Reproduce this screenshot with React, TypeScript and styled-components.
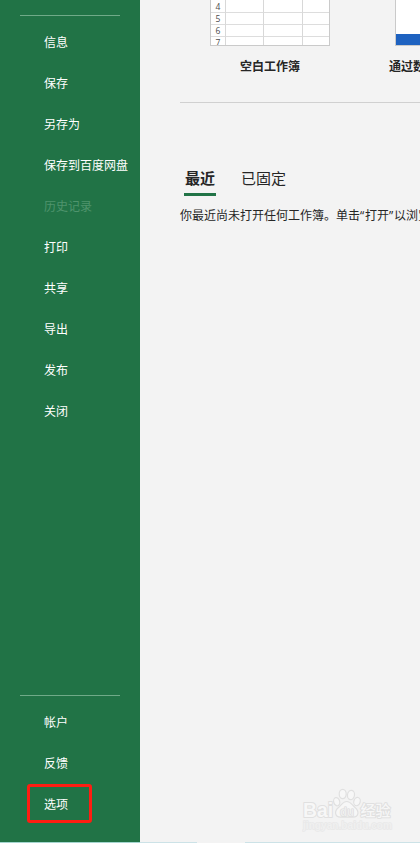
import React from "react";
import styled, { createGlobalStyle } from "styled-components";

const GlobalStyle = createGlobalStyle`
  * { box-sizing: border-box; }
  body {
    margin: 0;
    background: #f3f3f3;
    color: #262626;
    font: 12px/18px "Noto Sans CJK SC", sans-serif;
    overflow: hidden;
  }
`;

const Window = styled.div`
  display: flex;
  flex-direction: column;
  width: 420px;
  height: 843px;
  overflow: hidden;
`;

const Body = styled.div`
  display: flex;
  flex: 1;
  min-height: 0;
`;

const Sidebar = styled.nav`
  display: flex;
  flex-direction: column;
  justify-content: space-between;
  flex: none;
  width: 140px;
  padding: 15px 0 17px;
  background: #217346;
`;

const NavGroup = styled.div`
  display: flex;
  flex-direction: column;
`;

const NavRule = styled.div`
  height: 1px;
  margin: 0 20px 6px;
  background: #70aa88;
`;

const NavItem = styled.a<{ $disabled?: boolean }>`
  display: flex;
  align-items: center;
  position: relative;
  height: 41px;
  padding: 0 0 2px 44px;
  white-space: nowrap;
  color: ${(p) => (p.$disabled ? "#4f946d" : "#ffffff")};
`;

const Highlight = styled.span`
  position: absolute;
  left: 27px;
  top: 0;
  width: 65px;
  height: 39px;
  border: 3px solid #ff1d12;
  border-radius: 3px;
`;

const Main = styled.main`
  display: flex;
  flex-direction: column;
  flex: 1;
  min-width: 0;
  padding-left: 40px;
  position: relative;
  overflow: hidden;
`;

const Templates = styled.section`
  display: flex;
  gap: 65px;
  flex: none;
  width: 400px;
  height: 103px;
  padding-left: 30px;
  border-bottom: 1px solid #d0d0d0;
`;

const Template = styled.div`
  display: flex;
  flex-direction: column;
  align-items: center;
  gap: 11px;
  width: 120px;
  flex: none;
`;

const TemplateName = styled.div`
  font-weight: 700;
  white-space: nowrap;
`;

const Sheet = styled.div`
  display: grid;
  grid-template-columns: 15px 38px 39px 26px;
  grid-template-rows: 13px 12px 12px 8px;
  width: 120px;
  height: 46px;
  border: 1px solid #cacaca;
  border-top: 0;
  background: #fff;
  overflow: hidden;
`;

const Cell = styled.div<{ $last?: boolean }>`
  border-right: ${(p) => (p.$last ? "0" : "1px solid #d8d8d8")};
  border-bottom: 1px solid #dddddd;

  &:nth-last-child(-n + 4) {
    border-bottom: 0;
  }
`;

const RowNumber = styled(Cell)`
  display: flex;
  justify-content: center;
  align-items: flex-end;
  font: 8.5px/11px "Open Sans", sans-serif;
  color: #4c4c4c;

  &:nth-last-child(4) {
    align-items: flex-start;
  }
`;

const Tour = styled.div`
  width: 120px;
  height: 46px;
  border: 1px solid #cacaca;
  border-top: 0;
  background: linear-gradient(#fff 34px, #1e62c0 34px);
`;

const Tabs = styled.div`
  display: flex;
  gap: 24px;
  margin: 64px 0 0 4px;
`;

const Tab = styled.div<{ $active?: boolean }>`
  height: 29px;
  padding: 0 1px;
  font-size: 15px;
  line-height: 22px;
  font-weight: ${(p) => (p.$active ? 700 : 400)};
  border-bottom: 3px solid ${(p) => (p.$active ? "#217346" : "transparent")};
`;

const EmptyMessage = styled.p`
  margin: 10px 0 0;
  white-space: nowrap;
`;

const Quote = styled.span`
  display: inline-block;
  width: 5px;
  font-family: "Open Sans", sans-serif;
  line-height: 1;
`;

const Watermark = styled.div`
  position: absolute;
  left: 162px;
  top: 786px;
  width: 94px;
  height: 48px;
`;

const Edge = styled.div`
  flex: none;
  height: 1px;
  background: linear-gradient(90deg, #a5d6d0 140px, #cce2e7 140px 197px, #f3f3f3 197px 245px, #cce2e7 245px);
`;

const primary = ["信息", "保存", "另存为", "保存到百度网盘", "历史记录", "打印", "共享", "导出", "发布", "关闭"];
const secondary = ["帐户", "反馈", "选项"];

function BaiduMark() {
  return (
    <Watermark>
      <svg width="94" height="48" viewBox="0 0 94 48">
        <g fill="#f7f7f7" stroke="#e0e0e0" strokeWidth="1.2" strokeLinejoin="round">
          <ellipse cx="34.7" cy="15.7" rx="3" ry="4.2" transform="rotate(-15 34.7 15.7)" />
          <ellipse cx="40.7" cy="8" rx="3.5" ry="4.7" />
          <ellipse cx="49" cy="9" rx="3.5" ry="4.7" transform="rotate(8 49 9)" />
          <ellipse cx="55" cy="15.6" rx="3.2" ry="4.2" transform="rotate(15 55 15.6)" />
          <path d="M44.7 15.5c-4 0-5.300 3.500-8.200 6-4.500 3.800-3.800 9.500 2 9.700h12.500c5.800-.2 6.500-5.900 2-9.700-2.900-2.500-4.300-6-8.300-6z" />
          <g fontFamily="Liberation Sans, sans-serif" fontWeight="700" paintOrder="stroke" strokeWidth="2">
            <text x="1" y="31" fontSize="20" textLength="30" lengthAdjust="spacingAndGlyphs">Bai</text>
            <text x="38" y="29.5" fontSize="12" fill="#eeeeee" stroke="#dadada" strokeWidth="1.2" textLength="14" lengthAdjust="spacingAndGlyphs">du</text>
            <text x="1" y="43" fontSize="10" fill="#f0f0f0" stroke="#e8e8e8" strokeWidth="1.4" textLength="89" lengthAdjust="spacingAndGlyphs">jingyan.baidu.com</text>
          </g>
          <text x="58.500" y="29.500" fontSize="15" fontWeight="500" strokeWidth="2" fontFamily="Noto Sans CJK SC, sans-serif" paintOrder="stroke">经验</text>
        </g>
      </svg>
    </Watermark>
  );
}

export default function App() {
  return (
    <Window>
      <GlobalStyle />
      <Body>
        <Sidebar>
          <NavGroup>
            <NavRule />
            {primary.map((label) => (
              <NavItem key={label} $disabled={label === "历史记录"}>{label}</NavItem>
            ))}
          </NavGroup>
          <NavGroup>
            <NavRule />
            {secondary.map((label) => (
              <NavItem key={label}>
                {label}
                {label === "选项" && <Highlight />}
              </NavItem>
            ))}
          </NavGroup>
        </Sidebar>
        <Main>
          <Templates>
            <Template>
              <Sheet>
                {[4, 5, 6, 7].map((n) => (
                  <React.Fragment key={n}>
                    <RowNumber>{n}</RowNumber>
                    <Cell />
                    <Cell />
                    <Cell $last />
                  </React.Fragment>
                ))}
              </Sheet>
              <TemplateName>空白工作簿</TemplateName>
            </Template>
            <Template>
              <Tour />
              <TemplateName>通过数据透视表获取更多</TemplateName>
            </Template>
          </Templates>
          <Tabs>
            <Tab $active>最近</Tab>
            <Tab>已固定</Tab>
          </Tabs>
          <EmptyMessage>
            你最近尚未打开任何工作簿。单击<Quote>“</Quote>打开<Quote>”</Quote>以浏览工作簿。
          </EmptyMessage>
          <BaiduMark />
        </Main>
      </Body>
      <Edge />
    </Window>
  );
}
